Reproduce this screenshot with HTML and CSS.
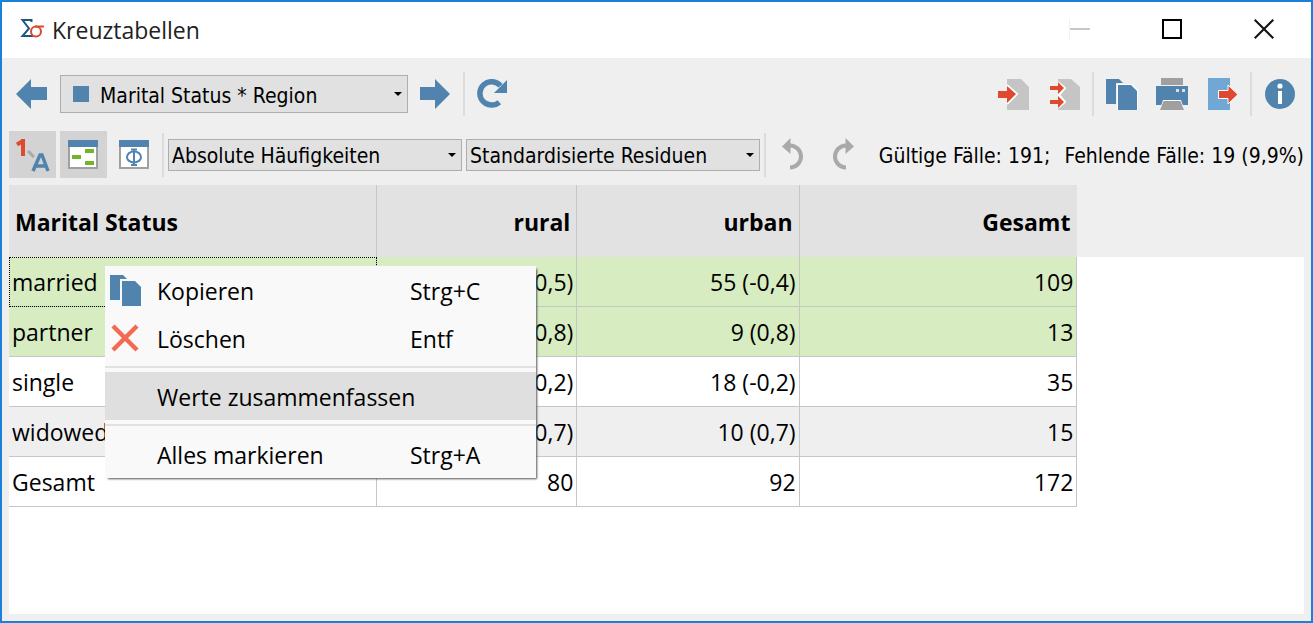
FILE: index.html
```html
<!DOCTYPE html>
<html lang="de">
<head>
<meta charset="utf-8">
<title>Kreuztabellen</title>
<link rel="stylesheet" href="styles.css">
</head>
<body>
<div class="window">
  <header class="titlebar">
    <svg class="logo" width="24" height="20" viewBox="0 0 24 20" fill="none">
      <path d="M11.500 3V1H2.500L9 9.500L2.500 17H13" stroke="#1f5582" stroke-width="2"/>
      <circle cx="16" cy="12.500" r="5" stroke="#e04830" stroke-width="2"/>
      <path d="M15 7.500H24" stroke="#e04830" stroke-width="2"/>
    </svg>
    <h1 class="title">Kreuztabellen</h1>
    <div class="window-buttons">
      <button class="win-btn" aria-label="Minimieren"><svg width="21" height="20"><path d="M.5 0V20" stroke="#f0f0f0"/><path d="M1 10H21" stroke="#c8c8c8" stroke-width="2"/></svg></button>
      <button class="win-btn" aria-label="Maximieren"><svg width="20" height="20" fill="none"><path d="M1 1H19V19H1Z" stroke="#000" stroke-width="2"/></svg></button>
      <button class="win-btn" aria-label="Schließen"><svg width="20" height="20"><path d="M.7 .7L19.300 19.300M19.300 .7L.7 19.300" stroke="#111" stroke-width="2"/></svg></button>
    </div>
  </header>

  <div class="toolbar toolbar-main">
    <button class="tool" aria-label="Zurück"><svg width="32" height="30"><path d="M0 15L15 0V8H31V21H15V30Z" fill="#5084af"/></svg></button>
    <div class="combo combo-table">
      <span class="swatch"></span>
      <select aria-label="Tabelle"><option>Marital Status * Region</option></select>
    </div>
    <button class="tool" aria-label="Weiter"><svg width="31" height="30"><path d="M30 15L15 0V8H0V21H15V30Z" fill="#5084af"/></svg></button>
    <span class="divider"></span>
    <button class="tool" aria-label="Aktualisieren"><svg width="32" height="30" fill="none"><path d="M23.500 6.800A11.700 11.700 0 1 0 22.300 23.200" stroke="#5084af" stroke-width="5.500"/><path d="M30 1V14H17Z" fill="#5084af"/></svg></button>
    <div class="tools-right">
      <button class="tool" aria-label="Einfügen"><svg width="32" height="32"><path d="M9 1H23L31 9V32H9Z" fill="#c5c5c5"/><path d="M9 7L19 16L9 26" fill="#efefef" stroke="#fff" stroke-width="2"/><path d="M0 13H9V8L18 16L9 25V20H0Z" fill="#df4930"/></svg></button>
      <button class="tool" aria-label="Alle einfügen"><svg width="32" height="32"><path d="M10 1H23L32 9V32H10Z" fill="#c5c5c5"/><path d="M9 3L17 10L12 17L17 24L9 31Z" fill="#efefef"/><path d="M10 4L17 10L11 17L17 24L10 30" fill="none" stroke="#fff" stroke-width="2"/><path d="M2 8H10V4L16 10L10 16V12H2ZM2 22H10V18L16 24L10 30V26H2Z" fill="#df4930"/></svg></button>
      <span class="divider"></span>
      <button class="tool" aria-label="Kopieren"><svg width="32" height="32"><path d="M0 1H13L17 5H10V26H0Z" fill="#5084af"/><path d="M11 6H26L32 12V33H11Z" fill="#fff"/><path d="M12 7H25L31 13V32H12Z" fill="#5084af"/></svg></button>
      <button class="tool" aria-label="Drucken"><svg width="32" height="32"><path d="M5 0H27V7H5Z" fill="#a0a0a0"/><path d="M0 8H32V27H0Z" fill="#5084af"/><path d="M20 11H23V14H20ZM26 11H29V14H26Z" fill="#ddd"/><path d="M7 22H25L28.500 32H3.500Z" fill="#fff"/><path d="M7.500 23H24.500L28 32H4Z" fill="#a0a0a0"/></svg></button>
      <button class="tool" aria-label="Exportieren"><svg width="32" height="32"><path d="M2 0H24V32H2Z" fill="#70a7d5"/><path d="M12.500 12.500H22V7L32 16.500L22 26V20.500H12.500Z" fill="#df4930" stroke="#fff"/></svg></button>
      <span class="divider"></span>
      <button class="tool" aria-label="Info"><svg width="32" height="32"><circle cx="16" cy="16" r="15" fill="#5084af"/><circle cx="16" cy="8" r="2.600" fill="#fff"/><path d="M14 13H18V26H14Z" fill="#fff"/></svg></button>
    </div>
  </div>

  <div class="toolbar toolbar-view">
    <button class="toggle on" aria-label="Werte und Labels"><svg width="34" height="34" fill="none"><path d="M7 1V18M7 3L1 6.500" stroke="#df4930" stroke-width="4"/><path d="M12 13L18 19" stroke="#a8a8a8" stroke-width="3"/><path d="M17 33L24 17H26L32 33M20 28H29" stroke="#5084af" stroke-width="3.500"/></svg></button>
    <button class="toggle on" aria-label="Hervorheben"><svg width="31" height="30"><path d="M0 0H30V29H0Z" fill="#a0a0a0"/><path d="M2 7H28V27H2Z" fill="#fff"/><path d="M0 0H30V7H0Z" fill="#5084af"/><path d="M17 9H26V13H17ZM4 15H13V19H4ZM17 21H26V25H17Z" fill="#72b527"/></svg></button>
    <button class="toggle" aria-label="Koeffizienten"><svg width="31" height="30" fill="none"><path d="M0 0H30V29H0Z" fill="#a0a0a0"/><path d="M2 7H28V27H2Z" fill="#fff"/><path d="M0 0H30V7H0Z" fill="#5084af"/><ellipse cx="15" cy="17" rx="7" ry="5.500" stroke="#5084af" stroke-width="2"/><path d="M15 9V26M12 9.500H18M12 25H18" stroke="#5084af" stroke-width="2"/></svg></button>
    <span class="divider"></span>
    <div class="combo"><select aria-label="Häufigkeiten"><option>Absolute Häufigkeiten</option></select></div>
    <div class="combo"><select aria-label="Residuen"><option>Standardisierte Residuen</option></select></div>
    <span class="divider"></span>
    <div class="history">
      <button class="tool" aria-label="Rückgängig"><svg width="22" height="34" fill="none"><path d="M8 7.500A10.500 10.500 0 0 1 8 29.500" stroke="#a9a9a9" stroke-width="4"/><path d="M0 8.500L8.500 0V16Z" fill="#a9a9a9"/></svg></button>
      <button class="tool" aria-label="Wiederholen"><svg width="22" height="34" fill="none"><path d="M14 7.500A10.500 10.500 0 0 0 14 29.500" stroke="#a9a9a9" stroke-width="4"/><path d="M22 8.500L13.500 0V16Z" fill="#a9a9a9"/></svg></button>
    </div>
    <p class="status"><span>Gültige Fälle: 191;</span><span>Fehlende Fälle: 19 (9,9%)</span></p>
  </div>

  <main class="sheet">
    <table class="crosstab">
      <colgroup><col class="c-label"><col class="c-rural"><col class="c-urban"><col class="c-total"></colgroup>
      <thead>
        <tr><th>Marital Status</th><th>rural</th><th>urban</th><th>Gesamt</th></tr>
      </thead>
      <tbody>
        <tr class="selected"><td class="current">married</td><td>54 (0,5)</td><td>55 (-0,4)</td><td>109</td></tr>
        <tr class="selected"><td>partner</td><td>4 (-0,8)</td><td>9 (0,8)</td><td>13</td></tr>
        <tr><td>single</td><td>17 (0,2)</td><td>18 (-0,2)</td><td>35</td></tr>
        <tr class="alt"><td>widowed</td><td>5 (-0,7)</td><td>10 (0,7)</td><td>15</td></tr>
        <tr><td>Gesamt</td><td>80</td><td>92</td><td>172</td></tr>
      </tbody>
    </table>
    <div class="menu" role="menu">
      <button class="item" role="menuitem"><span class="icon"><svg width="32" height="32"><path d="M0 1H13L17 5H10V26H0Z" fill="#5084af"/><path d="M12 7H25L31 13V32H12Z" fill="#5084af"/></svg></span><span class="label">Kopieren</span><kbd>Strg+C</kbd></button>
      <button class="item" role="menuitem"><span class="icon"><svg width="30" height="28"><path d="M3 2L27 26M27 2L3 26" stroke="#f26a52" stroke-width="4.500"/></svg></span><span class="label">Löschen</span><kbd>Entf</kbd></button>
      <hr>
      <button class="item active" role="menuitem"><span class="icon"></span><span class="label">Werte zusammenfassen</span></button>
      <hr>
      <button class="item" role="menuitem"><span class="icon"></span><span class="label">Alles markieren</span><kbd>Strg+A</kbd></button>
    </div>
  </main>
</div>
</body>
</html>
```

FILE: styles.css
```css
* { box-sizing: border-box; }

body {
  margin: 0;
  font-family: "Open Sans", "Noto Sans", sans-serif;
  font-size: 23px;
  color: #000;
}

button {
  border: 0;
  padding: 0;
  background: none;
  font: inherit;
  color: inherit;
}

svg { display: block; }

.window {
  display: flex;
  flex-direction: column;
  min-height: 100vh;
  border: 2px solid #1a80d8;
  background: #efefef;
}

.titlebar {
  display: flex;
  align-items: center;
  gap: 8px;
  height: 56px;
  padding: 0 37px 2px 18px;
  background: #fff;
}

.title {
  margin: 0;
  padding-top: 2px;
  font-size: 23px;
  font-weight: 400;
  color: #222;
}

.window-buttons {
  display: flex;
  gap: 72px;
  margin-left: auto;
}

.toolbar {
  display: flex;
  align-items: center;
  font-family: "DejaVu Sans Condensed", "DejaVu Sans", sans-serif;
  font-size: 21px;
}

.toolbar-main {
  height: 73px;
  gap: 12px;
  padding: 0 15px 1px 14px;
}

.toolbar-view {
  height: 47px;
  gap: 4px;
  padding: 0 7px;
}

.tools-right {
  display: flex;
  align-items: center;
  gap: 18px;
  margin-left: auto;
}

.tools-right .divider { margin: 0 -6px; }

.divider {
  width: 2px;
  height: 44px;
  background: #dcdcdc;
}

.combo {
  position: relative;
  display: flex;
  align-items: center;
  flex: 0 1 294px;
  height: 32px;
  border: 1px solid #adadad;
  background: #e1e1e1;
}

.combo::after {
  content: "";
  position: absolute;
  right: 5px;
  border: 4px solid transparent;
  border-top-color: #000;
  border-bottom: 0;
  pointer-events: none;
}

.combo select {
  flex: 1;
  min-width: 0;
  height: 100%;
  padding: 3px 16px 0 3px;
  border: 0;
  background: none;
  appearance: none;
  font: inherit;
  color: inherit;
}

.combo-table {
  flex-basis: 348px;
  height: 38px;
  padding-left: 12px;
}

.combo-table select { padding-left: 11px; }

.swatch {
  width: 16px;
  height: 16px;
  background: #5084af;
}

.toggle {
  display: flex;
  align-items: center;
  justify-content: center;
  width: 47px;
  height: 47px;
}

.toggle.on { background: #d3d3d3; }

.history {
  display: flex;
  gap: 28px;
  margin-left: 12px;
}

.status {
  display: flex;
  gap: 14px;
  margin: 0 0 0 auto;
  padding-top: 2px;
  white-space: nowrap;
}

.sheet {
  position: relative;
  flex: 1;
  margin: 7px;
  background: linear-gradient(#efefef 72px, #fff 72px);
}

.crosstab {
  width: 82.5%;
  table-layout: fixed;
  border-collapse: separate;
  border-spacing: 0;
}

.c-label { width: 34.4%; }
.c-rural { width: 18.8%; }
.c-urban { width: 20.8%; }
.c-total { width: 26%; }

.crosstab th {
  height: 72px;
  padding: 2px 6px 0;
  border-right: 1px solid #c6c6c6;
  background: #e2e2e2;
  text-align: right;
}

.crosstab th:last-child { border-right-color: #e2e2e2; }

.crosstab td {
  height: 50px;
  padding: 0 3px;
  border-right: 1px solid #c6c6c6;
  border-bottom: 1px solid #c6c6c6;
  text-align: right;
}

.crosstab th:first-child,
.crosstab td:first-child { text-align: left; }

.selected { background: #d7ecc0; }

.alt { background: #efefef; }

.crosstab .current {
  outline: 1px dotted #000;
  outline-offset: -1px;
}

.menu {
  position: absolute;
  top: 81px;
  left: 96px;
  width: 431px;
  background: #f9f9f9;
  box-shadow: 2px 2px 2px -1px #555;
}

.item {
  display: grid;
  grid-template-columns: 52px 253px 1fr;
  align-items: center;
  width: 100%;
  height: 48px;
  padding-top: 2px;
  text-align: left;
  white-space: nowrap;
}

.item.active { background: #dfdfdf; }

.item .icon { padding: 0 0 2px 5px; }

.item kbd { font: inherit; }

.menu hr {
  height: 2px;
  margin: 4px 0;
  border: 0;
  background: #e2e2e2;
}
```
